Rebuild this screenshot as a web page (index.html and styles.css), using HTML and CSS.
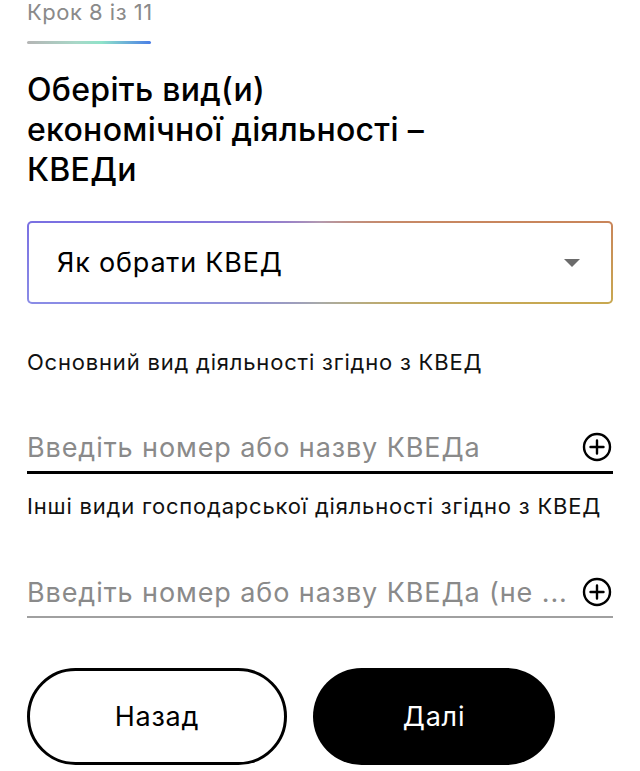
FILE: index.html
```html
<!DOCTYPE html>
<html lang="uk">
<head>
<meta charset="utf-8">
<link rel="stylesheet" href="styles.css">
</head>
<body>
<main class="page">
  <div class="step">Крок 8 із 11</div>
  <div class="progress"></div>
  <h1 class="title">Оберіть вид(и) економічної діяльності – КВЕДи</h1>
  <div class="select">
    <span class="select-text">Як обрати КВЕД</span>
    <span class="caret"></span>
  </div>
  <div class="label label-main">Основний вид діяльності згідно з КВЕД</div>
  <div class="field field-active">
    <span class="placeholder">Введіть номер або назву КВЕДа</span>
    <svg class="plus" viewBox="0 0 30 30" width="30" height="30"><circle cx="15" cy="15" r="13" fill="none" stroke="#000" stroke-width="2.4"/><path d="M15 8.5v13M8.5 15h13" stroke="#000" stroke-width="2.4" stroke-linecap="round"/></svg>
  </div>
  <div class="label label-other">Інші види господарської діяльності згідно з КВЕД</div>
  <div class="field field-idle">
    <span class="placeholder">Введіть номер або назву КВЕДа (не ...</span>
    <svg class="plus" viewBox="0 0 30 30" width="30" height="30"><circle cx="15" cy="15" r="13" fill="none" stroke="#000" stroke-width="2.4"/><path d="M15 8.5v13M8.5 15h13" stroke="#000" stroke-width="2.4" stroke-linecap="round"/></svg>
  </div>
  <div class="actions">
    <button class="btn btn-back">Назад</button>
    <button class="btn btn-next">Далі</button>
  </div>
</main>
</body>
</html>
```
FILE: styles.css
```css
html, body {
  margin: 0;
  padding: 0;
  background: #fff;
}
.page {
  padding: 0 27px;
  color: #000;
  font-family: Inter, "Noto Sans", sans-serif;
}
.step {
  font-size: 22px;
  line-height: 24px;
  letter-spacing: 0.5px;
  color: #8a8a8a;
}
.progress {
  width: 124px;
  height: 3px;
  margin-top: 17px;
  border-radius: 2px;
  background: linear-gradient(to right, #b5b5b5 0%, #a8d8c8 40%, #8fe3c9 60%, #4a7ee6 100%);
}
.title {
  font-weight: 500;
  font-size: 32px;
  line-height: 40px;
  letter-spacing: 0.3px;
  margin: 26px 0 0 0;
  max-width: 420px;
}
.select {
  margin-top: 31px;
  height: 79px;
  border: 2px solid transparent;
  border-radius: 5px;
  background:
    linear-gradient(#fff, #fff) padding-box,
    conic-gradient(from 0deg, #b39ab0 0deg, #c68a6a 60deg, #c9855a 82deg, #c8a850 98deg, #b4ac88 140deg, #a8aaa8 180deg, #9898c8 230deg, #8a8ce6 262deg, #7a70e2 278deg, #9a82c8 320deg, #b39ab0 360deg) border-box;
  display: flex;
  align-items: center;
  justify-content: space-between;
  padding: 0 31px 0 28px;
}
.select-text {
  font-size: 27px;
  letter-spacing: 0.8px;
}
.caret {
  width: 0;
  height: 0;
  border-left: 8px solid transparent;
  border-right: 8px solid transparent;
  border-top: 8px solid #6b6b6b;
}
.label {
  font-size: 22px;
  line-height: 24px;
  letter-spacing: 0.8px;
  color: #111;
  white-space: nowrap;
}
.label-main {
  margin-top: 46px;
}
.label-other {
  margin-top: 20px;
}
.field {
  display: flex;
  align-items: center;
  justify-content: space-between;
  height: 48px;
}
.field-active {
  margin-top: 49px;
  border-bottom: 3px solid #000;
}
.field-idle {
  margin-top: 50px;
  border-bottom: 2px solid #a0a0a0;
}
.placeholder {
  font-size: 27px;
  letter-spacing: 0.9px;
  color: #8a8a8a;
  white-space: nowrap;
}
.plus {
  flex: none;
  margin-right: 1px;
}
.actions {
  display: flex;
  gap: 26px;
  margin-top: 50px;
}
.btn {
  height: 97px;
  border-radius: 49px;
  font-family: Inter, "Noto Sans", sans-serif;
  font-size: 27px;
  letter-spacing: 0.8px;
  cursor: pointer;
  padding: 0;
}
.btn-back {
  width: 260px;
  background: #fff;
  color: #000;
  border: 3px solid #000;
}
.btn-next {
  width: 242px;
  background: #000;
  color: #fff;
  border: none;
}
```
